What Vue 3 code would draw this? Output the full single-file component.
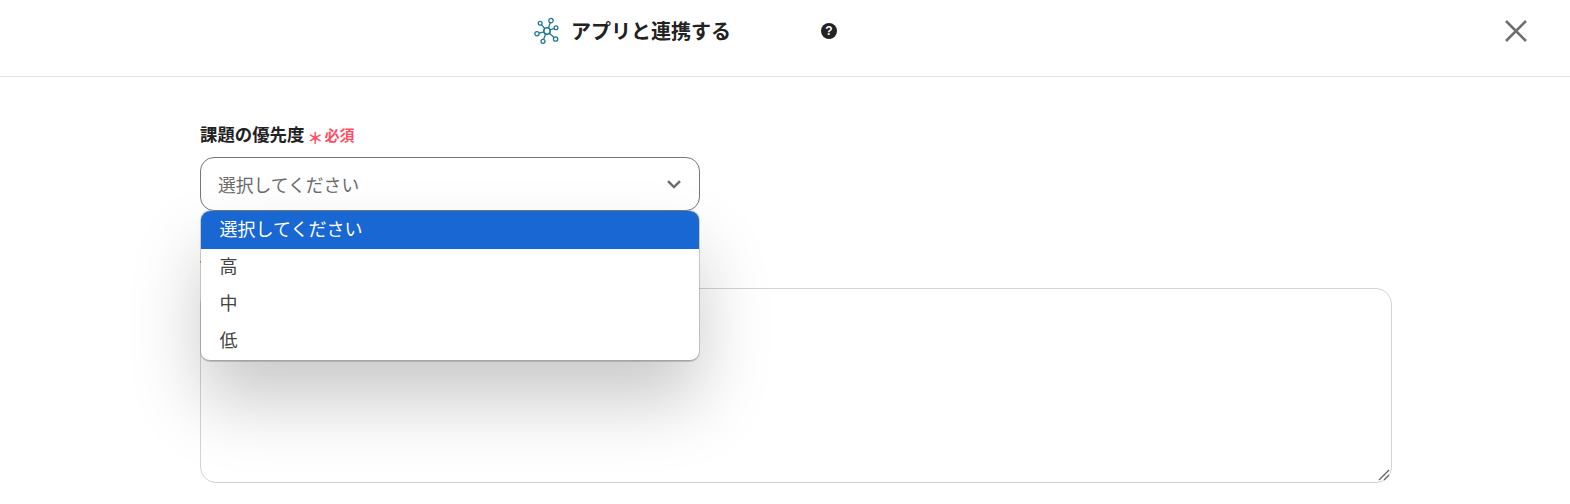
<script setup>
const options = ['選択してください', '高', '中', '低']
</script>

<template>
  <div class="page">
    <header class="head">
      <div class="title-wrap">
        <svg class="logo" width="26" height="28" viewBox="0 0 26 28" fill="none" stroke="#1f7a94" stroke-width="1.3">
          <circle cx="13" cy="14" r="3.2" stroke-width="1.6" />
          <path d="M14.5 11 L16.4 5.4 M16 13 L20.2 11.4 M15.4 16.2 L20 20.4 M11.6 17 L9.7 22.3 M10 14.8 L5 16.2 M10.8 11.6 L7.4 7.6" />
          <circle cx="17" cy="3.6" r="2.2" />
          <circle cx="22" cy="10.8" r="1.9" />
          <circle cx="21.6" cy="22" r="2.2" />
          <circle cx="9" cy="24.3" r="2" />
          <circle cx="3" cy="16.8" r="2.1" />
          <circle cx="6.2" cy="6.2" r="1.9" />
        </svg>
        <h1 class="title">アプリと連携する</h1>
        <svg class="help" width="16" height="16" viewBox="0 0 16 16">
          <circle cx="8" cy="8" r="8" fill="#222" />
          <text x="8" y="12.4" text-anchor="middle" class="help-mark">?</text>
        </svg>
      </div>
      <svg class="close" width="24" height="24" viewBox="0 0 24 24" stroke="#6f6f6f" stroke-width="2.6">
        <path d="M2 2 L22 22 M22 2 L2 22" />
      </svg>
    </header>

    <main class="form">
      <div class="field first">
        <div class="label-row">
          <label class="label">課題の優先度</label>
          <span class="star">＊</span>
          <span class="req">必須</span>
        </div>
        <div class="select-wrap">
          <div class="select">
            <span>選択してください</span>
            <svg width="14" height="9" viewBox="0 0 14 9" fill="none" stroke="#6c6c6c" stroke-width="2.4">
              <path d="M1 1.2 L7 7 L13 1.2" />
            </svg>
          </div>
          <ul class="menu">
            <li v-for="(opt, i) in options" :key="opt" :class="{ active: i === 0 }">{{ opt }}</li>
          </ul>
        </div>
      </div>

      <div class="field">
        <label class="label second">課題の説明</label>
        <div class="area">
          <svg class="grip" width="12" height="12" viewBox="0 0 12 12" stroke="#666" stroke-width="1.4">
            <path d="M1 11 L11 1 M6 11 L11 6" />
          </svg>
        </div>
      </div>
    </main>
  </div>
</template>

<style>
html, body {
  background: #fff;
}
</style>

<style scoped>
.page {
  width: 1570px;
  height: 504px;
  overflow: hidden;
  font-family: "Noto Sans CJK JP", "Noto Sans", sans-serif;
  color: #222;
}
.head {
  height: 77px;
  border-bottom: 1px solid #e4e4e7;
  display: flex;
  align-items: center;
  padding: 0 42px 15px 534px;
  justify-content: space-between;
  box-sizing: border-box;
}
.title-wrap {
  display: flex;
  align-items: center;
}
.logo {
  margin-right: 11px;
}
.title {
  margin: 0;
  font-size: 20px;
  font-weight: 700;
  line-height: 28px;
  width: 250px;
}
.help-mark {
  font: 700 12px "Liberation Sans", sans-serif;
  fill: #fff;
}
.form {
  padding: 44px 178px 0 200px;
}
.label-row {
  display: flex;
  align-items: center;
  height: 26px;
  margin-bottom: 10px;
}
.label {
  font-size: 17.4px;
  font-weight: 700;
  line-height: 26px;
}
.star {
  color: #ff4d63;
  font-size: 16px;
  font-weight: 700;
  line-height: 26px;
  margin: 5px 1px 0 3px;
}
.req {
  color: #ff4d63;
  font-size: 15px;
  font-weight: 700;
}
.select-wrap {
  position: relative;
  width: 500px;
}
.select {
  height: 54px;
  box-sizing: border-box;
  border: 1px solid #767676;
  border-radius: 14px;
  background: #fff;
  display: flex;
  align-items: center;
  justify-content: space-between;
  padding: 0 18px 0 17px;
  font-size: 17.8px;
  color: #6b6b6b;
}
.menu {
  position: absolute;
  z-index: 2;
  top: 54px;
  left: 1px;
  right: 1px;
  margin: 0;
  padding: 0;
  list-style: none;
  background: #fff;
  border-radius: 9px;
  overflow: hidden;
  border-bottom: 1px solid #a4a4a4;
  box-shadow: 0 0 0 1px rgba(120, 120, 120, 0.35), 0 40px 70px rgba(0, 0, 0, 0.21);
}
.menu li {
  height: 37px;
  line-height: 33px;
  padding-left: 18.5px;
  font-size: 18px;
  color: #444;
}
.menu li.active {
  height: 38px;
  line-height: 35px;
  background: #1967d2;
  color: #fff;
}
.second {
  display: block;
  margin-top: 42px;
  margin-bottom: 0;
}
.area {
  position: relative;
  height: 195px;
  box-sizing: border-box;
  margin-top: 9px;
  border: 1px solid #d2d2d8;
  border-radius: 16px;
  background: #fff;
}
.grip {
  position: absolute;
  right: 1px;
  bottom: 1px;
}
</style>
